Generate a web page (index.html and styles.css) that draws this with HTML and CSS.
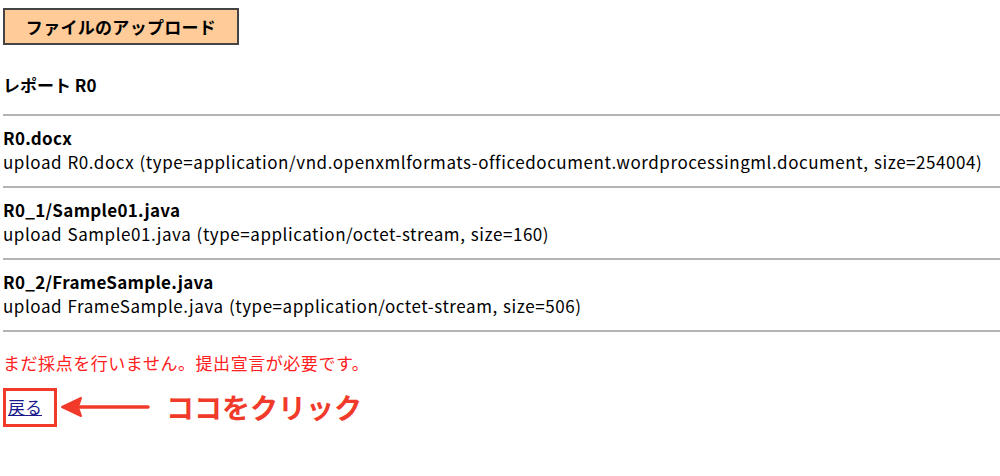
FILE: index.html
```html
<!DOCTYPE html>
<html lang="ja">
<head>
<meta charset="utf-8">
<link rel="stylesheet" href="styles.css">
</head>
<body>
<div class="page">
  <div class="upload-btn">ファイルのアップロード</div>
  <h3 class="report-title">レポート R0</h3>
  <hr class="rule">
  <div class="file">
    <div class="file-name">R0.docx</div>
    <div class="file-info">upload R0.docx (type=application/vnd.openxmlformats-officedocument.wordprocessingml.document, size=254004)</div>
  </div>
  <hr class="rule">
  <div class="file">
    <div class="file-name">R0_1/Sample01.java</div>
    <div class="file-info">upload Sample01.java (type=application/octet-stream, size=160)</div>
  </div>
  <hr class="rule">
  <div class="file">
    <div class="file-name">R0_2/FrameSample.java</div>
    <div class="file-info">upload FrameSample.java (type=application/octet-stream, size=506)</div>
  </div>
  <hr class="rule">
  <p class="notice">まだ採点を行いません。提出宣言が必要です。</p>
  <div class="back-row">
    <span class="back-box"><a href="#" class="back-link">戻る</a></span>
    <svg class="arrow" width="92" height="24" viewBox="0 0 92 24">
      <path d="M20 12 L88 12" stroke="#f23a2a" stroke-width="3.5" stroke-linecap="round"/>
      <path d="M2 12 L21 3 L18 12 L21 21 Z" fill="#f23a2a" stroke="#f23a2a" stroke-width="2" stroke-linejoin="round"/>
    </svg>
    <span class="click-here">ココをクリック</span>
  </div>
</div>
</body>
</html>
```
FILE: styles.css
```css
html, body {
  margin: 0;
  padding: 0;
  background: #fff;
}
body {
  font-family: "Noto Sans CJK JP", "Noto Sans", sans-serif;
  font-size: 17px;
  color: #000;
}
.page {
  padding: 8px 0 0 3px;
}
.upload-btn {
  display: inline-block;
  box-sizing: border-box;
  width: 236px;
  height: 37px;
  line-height: 33px;
  border: 2px solid #444;
  background: #ffcc99;
  text-align: center;
  font-weight: bold;
  font-size: 17px;
  letter-spacing: 0.3px;
}
.report-title {
  margin: 28px 0 0;
  font-size: 17px;
  font-weight: bold;
  line-height: 24px;
}
.rule {
  margin: 17px 0 0;
  border: 0;
  border-top: 2px solid #b4b4b4;
  height: 0;
}
.file {
  padding: 10px 0 12px;
  line-height: 24px;
}
.file + .rule { margin-top: 0; }
.file-name {
  font-weight: bold;
  letter-spacing: 0.3px;
}
.file-info {
  letter-spacing: 0.55px;
  word-spacing: 1px;
}
.notice {
  margin: 19px 0 0;
  color: #ff2020;
  line-height: 24px;
  font-size: 17px;
  letter-spacing: 0.55px;
}
.back-row {
  display: flex;
  align-items: center;
  margin-top: 12px;
}
.back-box {
  display: inline-block;
  border: 3px solid #f23a2a;
  padding: 4px 12px 5px 2px;
  line-height: 24px;
}
.back-link {
  color: #1a1a8c;
  text-decoration: underline;
}
.arrow {
  margin-left: 3px;
  display: block;
}
.click-here {
  margin-left: 14px;
  font-size: 28px;
  font-weight: bold;
  color: #f23a2a;
}
```
